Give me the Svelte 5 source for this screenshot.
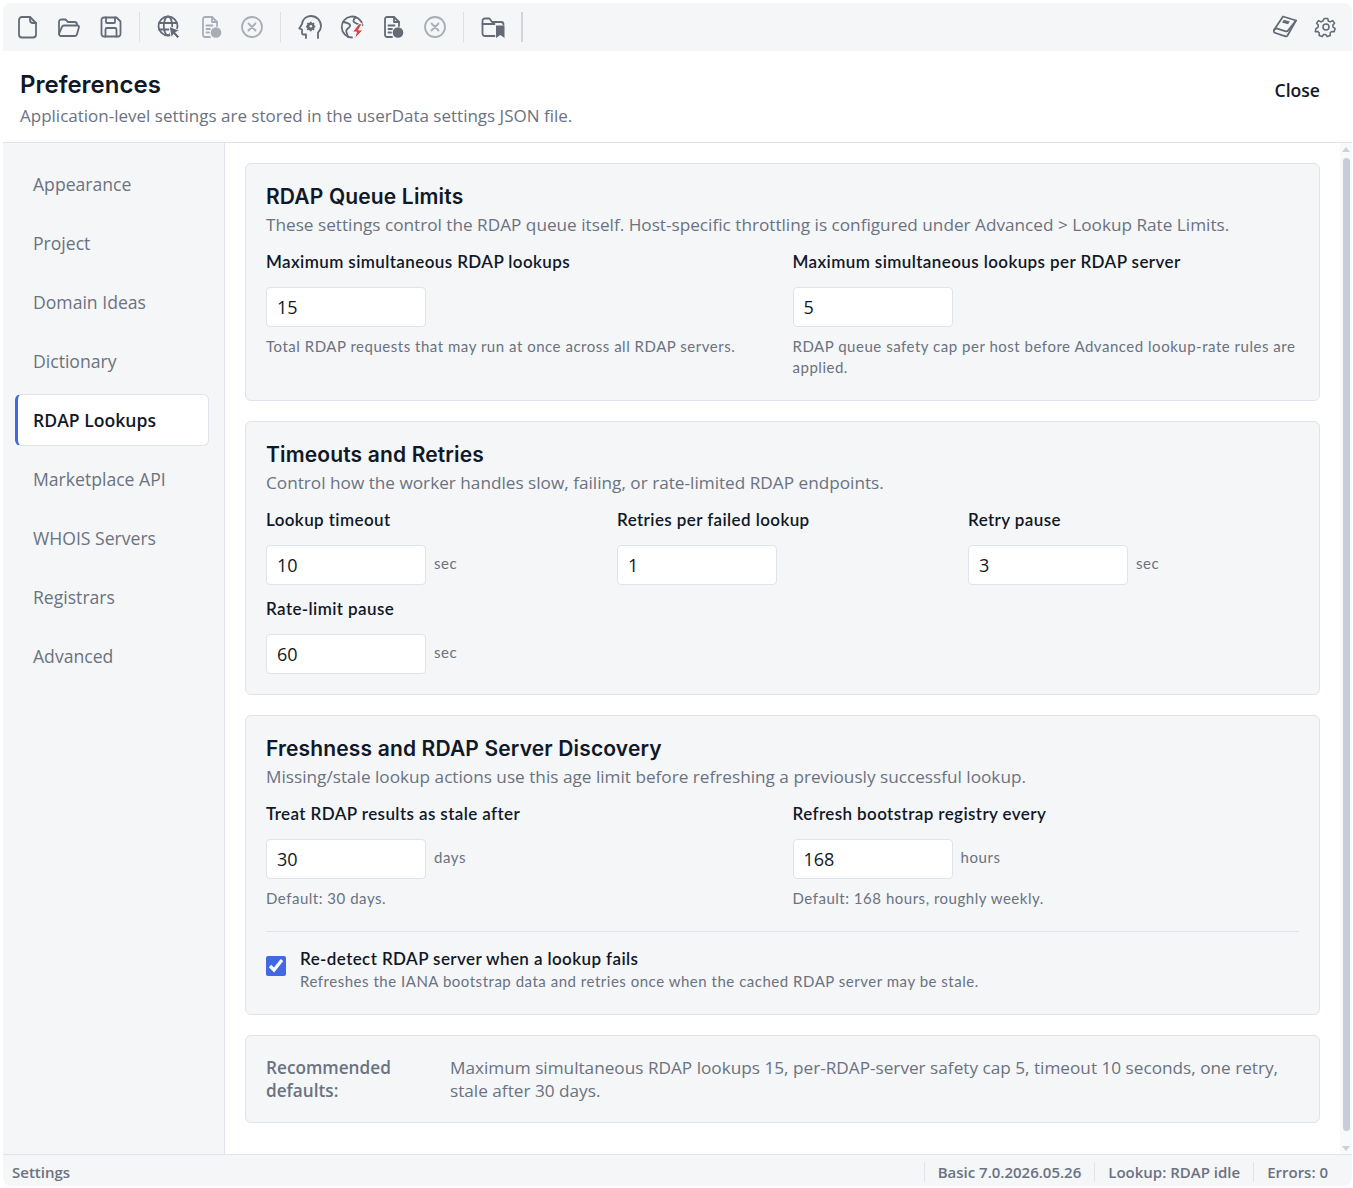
<script>
  const nav = ['Appearance', 'Project', 'Domain Ideas', 'Dictionary', 'RDAP Lookups', 'Marketplace API', 'WHOIS Servers', 'Registrars', 'Advanced']
  let active = 'RDAP Lookups'
  let redetect = true
</script>

<div class="window">
  <div class="toolbar">
    <button class="tool" aria-label="New">
      <svg viewBox="0 0 24 24"><path d="M6 2h8l6 6v11.500a3 3 0 0 1-3 3H6a3 3 0 0 1-3-3V5a3 3 0 0 1 3-3z"/><path d="M14 2v3a3 3 0 0 0 3 3h3"/></svg>
    </button>
    <button class="tool" aria-label="Open">
      <svg viewBox="1.500 0 24 24"><path d="M2.500 19V7a2.500 2.500 0 0 1 2.500-2.500h4l2.500 2.500h6.500a2.500 2.500 0 0 1 2.500 2.500v.5"/><path d="M2.500 19l2.800-6.800a2.500 2.500 0 0 1 2.300-1.700H21a1.500 1.500 0 0 1 1.400 2l-2 7a2 2 0 0 1-1.900 1.500H4.500a2 2 0 0 1-2-2z"/></svg>
    </button>
    <button class="tool" aria-label="Save">
      <svg viewBox="0 0 24 24"><path d="M5 2.500h12.500L21.500 6.500V19a2.500 2.500 0 0 1-2.500 2.500H5A2.500 2.500 0 0 1 2.500 19V5A2.500 2.500 0 0 1 5 2.500z"/><path d="M7 2.500V7a1 1 0 0 0 1 1h7a1 1 0 0 0 1-1V2.500"/><path d="M6.500 21.500V14.500a1.500 1.500 0 0 1 1.500-1.500h8a1.500 1.500 0 0 1 1.500 1.500v7"/></svg>
    </button>
    <span class="sep"></span>
    <button class="tool" aria-label="Lookup selected">
      <svg viewBox="0 0 24 24"><circle cx="11" cy="11" r="9.500"/><ellipse cx="11" cy="11" rx="4.200" ry="9.500"/><path d="M2 8h18M2 14.500h10"/><path class="cursor" d="M12.500 11.500l10.500 4.200-4.300 1.600 3.800 4.300-2.200 2-3.700-4.300-2.100 3.500z"/></svg>
    </button>
    <button class="tool dim" aria-label="Export">
      <svg viewBox="0 0 24 24"><path d="M11 22H6a2 2 0 0 1-2-2V4a2 2 0 0 1 2-2h7l5 5v4"/><path d="M13 2v5h5"/><path d="M7.500 10.500h6M7.500 14h3.500M7.500 17.500h2.500"/><circle class="solid" cx="17" cy="17.500" r="5.300"/></svg>
    </button>
    <button class="tool dim" aria-label="Stop">
      <svg viewBox="0 0 24 24"><circle cx="12" cy="12" r="10"/><path d="M8.500 8.500l7 7M15.500 8.500l-7 7"/></svg>
    </button>
    <span class="sep"></span>
    <button class="tool" aria-label="Settings profile">
      <svg viewBox="0 0 24 24"><path d="M8 23v-3.500H5.500A1.500 1.500 0 0 1 4 18v-3.500l-2.700-1 2.700-4.500C4.300 4.500 8 1 12.800 1 18.500 1 23 5.300 23 11c0 3-1.300 5-3 6.700V23"/><path class="solid" d="M11.500 5h2.400l.3 1.500 1.200.5 1.300-.8 1.600 1.700-.8 1.200.4 1.300 1.500.3v2.300l-1.500.3-.4 1.200.8 1.300-1.600 1.600-1.300-.8-1.200.5-.3 1.500h-2.400l-.3-1.500-1.200-.5-1.300.8-1.600-1.600.8-1.300-.5-1.200-1.500-.3v-2.300l1.500-.3.5-1.300-.8-1.200 1.600-1.700 1.300.8 1.200-.5z" transform="translate(3.800 3.200) scale(.7)"/><circle class="hole" cx="12.900" cy="11.200" r="1.300"/></svg>
    </button>
    <button class="tool" aria-label="Fast lookup">
      <svg viewBox="0 0 24 24"><path d="M12 22.500A10.500 10.500 0 1 1 22.500 10"/><path d="M3 7c3 .5 6 1 7 3s-2.500 3-3.500 5 1 4 1.500 7M15.500 2.500c-2 2-3 4-1 5s2.500 1.500 3.500 1.500"/><path class="bolt" d="M18.500 9l-6 8h4l-2 7 8.500-9h-4.500l3.500-6z"/></svg>
    </button>
    <button class="tool" aria-label="Export file">
      <svg viewBox="0 0 24 24"><path d="M11 22H6a2 2 0 0 1-2-2V4a2 2 0 0 1 2-2h7l5 5v4"/><path d="M13 2v5h5"/><path d="M7.500 10.500h6M7.500 14h3.500M7.500 17.500h2.500"/><circle class="solid" cx="17" cy="17.500" r="5.300"/></svg>
    </button>
    <button class="tool dim" aria-label="Cancel">
      <svg viewBox="0 0 24 24"><circle cx="12" cy="12" r="10"/><path d="M8.500 8.500l7 7M15.500 8.500l-7 7"/></svg>
    </button>
    <span class="sep"></span>
    <button class="tool" aria-label="Bookmarks">
      <svg viewBox="0 0 24 24"><path d="M13.500 21H4a2.500 2.500 0 0 1-2.500-2.500V6A2.500 2.500 0 0 1 4 3.500h4.500L11 7h9a2.500 2.500 0 0 1 2.500 2.500"/><path d="M1.500 9h12"/><path class="solid" d="M15 10.500h8.500V23l-4.200-3-4.300 3z"/></svg>
    </button>
    <span class="sep dark"></span>
    <span class="spacer"></span>
    <button class="tool" aria-label="Guide">
      <svg viewBox="0 0 24 24"><path d="M1 15L10 1.500l13 4-8.500 15a1.800 1.800 0 0 1-2 .8L2.500 18A2 2 0 0 1 1 15z"/><path d="M1.300 14.800c.6-1.200 1.500-1.500 3-1.100l8.500 2.600c1 .3 1.700 0 2.200-.8L23 5.500"/><path class="solid" d="M10.800 4.800l6 1.700-1.800 2.700-6-1.800z"/></svg>
    </button>
    <button class="tool" aria-label="Settings">
      <svg viewBox="-2 -2 28 28"><path d="M10 2h4l.7 3 2.200 1 2.700-1.500 2.400 3-2 2.300.2 2.300 2.500 1.700-1.200 3.700-3-.2-1.700 1.700.2 3-3.600 1.200-1.700-2.500h-2.400l-1.700 2.500-3.600-1.200.2-3-1.700-1.700-3 .2L.3 13.800l2.500-1.700.2-2.300-2-2.300 2.400-3L6.100 6l2.200-1z"/><circle cx="12" cy="12" r="3.500"/></svg>
    </button>
  </div>

  <header class="head">
    <div>
      <h1>Preferences</h1>
      <p>Application-level settings are stored in the userData settings JSON file.</p>
    </div>
    <button class="close">Close</button>
  </header>

  <div class="main">
    <nav class="side">
      {#each nav as item}
        <button class="nav" class:active={item === active} onclick={() => (active = item)}>{item}</button>
      {/each}
    </nav>

    <div class="content">
      <div class="pane">
        <section class="card">
          <h2>RDAP Queue Limits</h2>
          <p class="intro">These settings control the RDAP queue itself. Host-specific throttling is configured under Advanced &gt; Lookup Rate Limits.</p>
          <div class="grid two">
            <div class="field">
              <label for="q1">Maximum simultaneous RDAP lookups</label>
              <div class="row"><input id="q1" value="15" /></div>
              <small>Total RDAP requests that may run at once across all RDAP servers.</small>
            </div>
            <div class="field">
              <label for="q2">Maximum simultaneous lookups per RDAP server</label>
              <div class="row"><input id="q2" value="5" /></div>
              <small>RDAP queue safety cap per host before Advanced lookup-rate rules are applied.</small>
            </div>
          </div>
        </section>

        <section class="card">
          <h2>Timeouts and Retries</h2>
          <p class="intro">Control how the worker handles slow, failing, or rate-limited RDAP endpoints.</p>
          <div class="grid three">
            <div class="field">
              <label for="t1">Lookup timeout</label>
              <div class="row"><input id="t1" value="10" /><span class="unit">sec</span></div>
            </div>
            <div class="field">
              <label for="t2">Retries per failed lookup</label>
              <div class="row"><input id="t2" value="1" /></div>
            </div>
            <div class="field">
              <label for="t3">Retry pause</label>
              <div class="row"><input id="t3" value="3" /><span class="unit">sec</span></div>
            </div>
            <div class="field">
              <label for="t4">Rate-limit pause</label>
              <div class="row"><input id="t4" value="60" /><span class="unit">sec</span></div>
            </div>
          </div>
        </section>

        <section class="card">
          <h2>Freshness and RDAP Server Discovery</h2>
          <p class="intro">Missing/stale lookup actions use this age limit before refreshing a previously successful lookup.</p>
          <div class="grid two">
            <div class="field">
              <label for="f1">Treat RDAP results as stale after</label>
              <div class="row"><input id="f1" value="30" /><span class="unit">days</span></div>
              <small>Default: 30 days.</small>
            </div>
            <div class="field">
              <label for="f2">Refresh bootstrap registry every</label>
              <div class="row"><input id="f2" value="168" /><span class="unit">hours</span></div>
              <small>Default: 168 hours, roughly weekly.</small>
            </div>
          </div>
          <hr />
          <label class="check">
            <input type="checkbox" bind:checked={redetect} />
            <span class="check-text">
              <b>Re-detect RDAP server when a lookup fails</b>
              <small>Refreshes the IANA bootstrap data and retries once when the cached RDAP server may be stale.</small>
            </span>
          </label>
        </section>

        <section class="card defaults">
          <strong>Recommended defaults:</strong>
          <span>Maximum simultaneous RDAP lookups 15, per-RDAP-server safety cap 5, timeout 10 seconds, one retry, stale after 30 days.</span>
        </section>
      </div>
    </div>

    <div class="scrollbar">
      <span class="arrow up"></span>
      <span class="thumb"></span>
      <span class="arrow down"></span>
    </div>
  </div>

  <footer class="status">
    <span class="left">Settings</span>
    <span class="cell">Basic 7.0.2026.05.26</span>
    <span class="cell">Lookup: RDAP idle</span>
    <span class="cell">Errors: 0</span>
  </footer>
</div>

<style>
  :global(body) {
    margin: 0;
    background: #fff;
  }
  .window {
    box-sizing: border-box;
    width: 1349px;
    height: 1183px;
    margin: 3px 0 0 3px;
    display: flex;
    flex-direction: column;
    background: #fff;
    border-radius: 8px;
    overflow: hidden;
    font-family: "Open Sans", "Noto Sans", sans-serif;
    color: #111827;
  }
  button {
    font-family: inherit;
    background: none;
    border: 0;
    padding: 0;
    cursor: pointer;
  }
  .toolbar {
    height: 48px;
    flex: none;
    display: flex;
    align-items: center;
    padding: 0 14px 0 13px;
    background: #f4f6f8;
  }
  .tool {
    width: 24px;
    height: 24px;
    margin-right: 17.500px;
    color: #646b77;
    display: block;
    flex: none;
  }
  .tool:last-child {
    margin-right: 0;
  }
  .tool svg {
    display: block;
    width: 100%;
    height: 100%;
    fill: none;
    stroke: currentColor;
    stroke-width: 1.800;
    stroke-linecap: round;
    stroke-linejoin: round;
  }
  .tool .solid {
    fill: currentColor;
    stroke: none;
  }
  .tool .cursor {
    fill: currentColor;
    stroke: #f4f6f8;
    stroke-width: 1;
  }
  .tool .hole {
    fill: #f4f6f8;
    stroke: none;
  }
  .tool .bolt {
    fill: #d8494a;
    stroke: #f4f6f8;
    stroke-width: 1;
  }
  .dim {
    color: #a9aeb6;
  }
  .sep {
    width: 1px;
    height: 30px;
    background: #dde0e5;
    margin: 0 17px 0 -1.500px;
    flex: none;
  }
  .sep.dark {
    background: #d0d5dd;
    width: 2px;
    margin-left: -1px;
  }
  .spacer {
    flex: 1;
  }
  .head {
    height: 92px;
    flex: none;
    box-sizing: border-box;
    border-bottom: 1px solid #dfe3ea;
    display: flex;
    justify-content: space-between;
    align-items: flex-start;
    padding: 18px 32px 0 17px;
  }
  h1 {
    margin: 0;
    font-family: Inter, sans-serif;
    font-size: 24px;
    font-weight: 600;
    line-height: 32px;
    color: #111827;
  }
  .head p {
    margin: 2px 0 0;
    font-size: 17px;
    line-height: 26px;
    color: #6b7280;
  }
  .close {
    margin-top: 9px;
    font-size: 17.600px;
    font-weight: 600;
    line-height: 24px;
    color: #111827;
  }
  .main {
    flex: 1;
    min-height: 0;
    display: flex;
  }
  .side {
    width: 222px;
    flex: none;
    box-sizing: border-box;
    background: #f4f6f8;
    border-right: 1px solid #dfe3ea;
    padding: 15px 15px 0 12px;
    display: flex;
    flex-direction: column;
    gap: 7px;
  }
  .nav {
    box-sizing: border-box;
    height: 52px;
    text-align: left;
    padding-left: 17px;
    font-size: 17.600px;
    color: #6b7280;
    border: 1px solid transparent;
    border-radius: 6px;
  }
  .nav.active {
    background: #fff;
    color: #111827;
    font-weight: 600;
    border-color: #dfe3ea;
    border-left: 3px solid #4169e1;
    padding-left: 15px;
  }
  .content {
    flex: 1;
    min-width: 0;
    overflow: hidden;
  }
  .pane {
    padding: 20px 20px 0;
    display: flex;
    flex-direction: column;
    gap: 20px;
  }
  .card {
    box-sizing: border-box;
    background: #f4f6f8;
    border: 1px solid #dfe3ea;
    border-radius: 6px;
    padding: 20px;
  }
  h2 {
    margin: 0;
    font-family: Inter, sans-serif;
    font-size: 21px;
    font-weight: 600;
    letter-spacing: 0.15px;
    line-height: 26px;
    color: #111827;
  }
  .intro {
    margin: 2px 0 0;
    font-size: 17.200px;
    line-height: 26px;
    color: #6b7280;
  }
  .grid {
    display: grid;
    column-gap: 20px;
    row-gap: 11px;
    margin-top: 11px;
  }
  .two {
    grid-template-columns: 1fr 1fr;
  }
  .three {
    grid-template-columns: 1fr 1fr 1fr;
  }
  .field {
    min-width: 0;
  }
  .field label,
  .check b {
    display: block;
    font-family: Lato, sans-serif;
    font-size: 17px;
    font-weight: 600;
    letter-spacing: 0.4px;
    line-height: 26px;
    color: #111827;
  }
  .row {
    display: flex;
    align-items: center;
    gap: 8px;
    margin-top: 12px;
  }
  input:not([type]) {
    box-sizing: border-box;
    width: 160px;
    height: 40px;
    padding: 0 10px;
    background: #fff;
    border: 1px solid #dfe3ea;
    border-radius: 4px;
    font-family: "Open Sans", sans-serif;
    font-size: 18px;
    color: #111827;
  }
  .unit {
    font-family: Lato, sans-serif;
    font-size: 15px;
    letter-spacing: 0.6px;
    color: #6b7280;
    position: relative;
    top: -2px;
  }
  small {
    display: block;
    margin: 9px 0 2px;
    font-family: Lato, sans-serif;
    font-size: 15px;
    line-height: 21px;
    letter-spacing: 0.52px;
    color: #6b7280;
  }
  hr {
    border: 0;
    border-top: 1px solid #dfe3ea;
    margin: 20px 0 15px;
  }
  .check {
    display: flex;
    align-items: flex-start;
    gap: 14px;
    padding-bottom: 2px;
  }
  .check input {
    width: 20px;
    height: 20px;
    margin: 9px 0 0;
    accent-color: #4169e1;
    flex: none;
  }
  .check small {
    margin: 0;
  }
  .check b {
    line-height: 24px;
  }
  .defaults {
    display: grid;
    grid-template-columns: 164px 1fr;
    column-gap: 20px;
    font-size: 17.200px;
    line-height: 23px;
    color: #6b7280;
  }
  .defaults strong {
    font-weight: 600;
  }
  .scrollbar {
    width: 12px;
    flex: none;
    display: flex;
    flex-direction: column;
    align-items: center;
    padding-top: 4px;
    box-sizing: border-box;
    background: #f8f9fa;
  }
  .thumb {
    flex: 1;
    width: 7px;
    margin: 6px 0 15px;
    background: #c7cdd6;
    border-radius: 4px;
  }
  .arrow {
    width: 0;
    height: 0;
    border-left: 4px solid transparent;
    border-right: 4px solid transparent;
  }
  .arrow.up {
    border-bottom: 5px solid #ccd1d8;
  }
  .arrow.down {
    border-top: 5px solid #ccd1d8;
    margin-bottom: 3px;
  }
  .status {
    height: 32px;
    flex: none;
    box-sizing: border-box;
    border-top: 1px solid #dfe3ea;
    background: #f4f6f8;
    display: flex;
    align-items: center;
    padding: 2px 24px 0 9px;
    font-size: 15px;
    font-weight: 600;
    color: #6b7280;
  }
  .left {
    flex: 1;
  }
  .cell {
    border-left: 1px solid #dfe3ea;
    padding-left: 13px;
    margin-left: 13px;
    line-height: 20px;
  }
</style>
